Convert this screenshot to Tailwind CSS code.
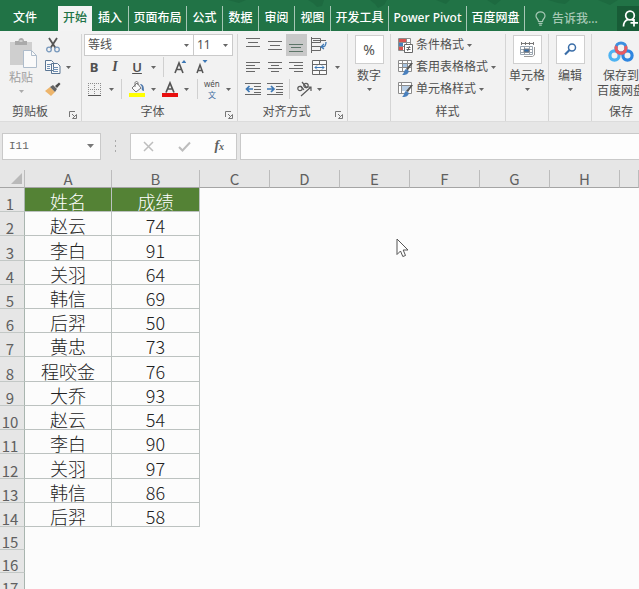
<!DOCTYPE html>
<html lang="zh-CN">
<head>
  <meta charset="UTF-8" />
  <meta name="viewport" content="width=device-width, initial-scale=1.0">
  <title>Excel</title>
  <script src="https://cdn.jsdelivr.net/npm/@tailwindcss/browser@4"></script>
</head>
<body class="h-screen overflow-hidden flex flex-col bg-[#fcfcfc] text-xs text-[#505050] font-['Noto_Sans','Noto_Sans_CJK_SC',sans-serif]">

  <!-- Shared icons -->
  <svg class="hidden">
    <symbol id="caret" viewBox="0 0 5 3"><path d="M0 0h5L2.5 3z" fill="#666" /></symbol>
    <symbol id="launcher" viewBox="0 0 8 8"><path d="M.5 6V.5H6M3 3l3 3M7.500 3.500v4h-4z" fill="none" stroke="#777" /></symbol>
  </svg>

  <!-- Tabs -->
  <nav class="relative flex shrink-0 items-end h-[31px] bg-[#217346] text-white font-medium overflow-hidden whitespace-nowrap">
    <svg class="absolute left-0 top-0 w-full h-2" viewBox="0 0 639 8" preserveAspectRatio="xMinYMin slice" fill="#1d6a40">
      <path d="M228 0h18l-7 3zM308 0h16l-2 6-5 1-4-4zM370 0h17l-3 5-6 3-3-4zM436 0h14l-4 4zM487 0h14l-6 5zM548 0h22l-5 4-7-1zM598 0h20l-8 5z" />
    </svg>
    <a href="#" class="relative w-[58px] h-[25px] pl-[13px] leading-[23px]">文件</a>
    <a href="#" class="relative w-[34px] h-[25px] text-center leading-[23px] bg-[#f3f3f3] text-[#217346]">开始</a>
    <div class="relative flex h-[25px] text-center leading-[23px] [&>a]:border-r [&>a]:border-[#a6c7b5]">
      <a href="#" class="w-[37px]">插入</a>
      <a href="#" class="w-[58px]">页面布局</a>
      <a href="#" class="w-9">公式</a>
      <a href="#" class="w-9">数据</a>
      <a href="#" class="w-9">审阅</a>
      <a href="#" class="w-9">视图</a>
      <a href="#" class="w-[58px]">开发工具</a>
      <a href="#" class="w-[78px]">Power Pivot</a>
      <a href="#" class="w-[58px]">百度网盘</a>
    </div>
    <button class="relative flex h-[25px] pl-2.5 gap-1.5 items-center text-[#a5c8b4] leading-[23px]">
      <svg class="w-[11px] h-[15px]" viewBox="0 0 11 15" fill="none" stroke="currentColor" stroke-width="1.200"><path d="M3.500 10.500C3.500 8 1 7.500 1 5a4.500 4.200 0 0 1 9 0c0 2.500-2.500 3-2.500 5.500zM3.500 12.300h4M4.200 14.200h2.600" /></svg>
      告诉我...
    </button>
    <button aria-label="共享" class="relative ml-auto w-[22px] h-[25px] bg-[#185c37] overflow-hidden">
      <svg class="ml-[5px] w-[17px] h-[17px]" viewBox="0 0 17 17" fill="none" stroke="#fff" stroke-width="1.700"><circle cx="8" cy="5.500" r="4.300" /><path d="M1.500 16.500c0-3.500 1.500-6 4.500-7M10 9.500l1.500 1M12 9v7.500M8.500 12.800h7.500" /></svg>
    </button>
  </nav>

  <!-- Ribbon -->
  <div class="flex shrink-0 h-[91px] pt-[3px] bg-[#f2f2f2] overflow-hidden whitespace-nowrap leading-4 border-b border-[#dcdcdc] [&_h2]:leading-6">

    <section class="relative w-[82px] shrink-0 border-r border-[#d5d5d5]">
      <div class="flex h-[66px]">
        <button class="w-[42px] flex flex-col items-center pt-1 text-[#a0a0a0]">
          <svg class="w-7 h-[30px] shrink-0 ml-1" viewBox="0 0 28 30"><path d="M1 4h22v23H1z" fill="#cfcfcf" /><path d="M6 3h3.500c0-4 5.500-4 5.500 0H18v4H6z" fill="#aaa" /><path d="M10.500 3h3" stroke="#f2f2f2" /><path d="M14.500 12.500h8l5 5v12h-13z" fill="#fafafa" stroke="#aebccb" /><path d="M22.500 12.500v5h5" fill="none" stroke="#aebccb" /></svg>
          <span class="mt-0.5">粘贴</span>
          <svg class="w-[5px] h-[3px] mt-1 opacity-50"><use href="#caret" /></svg>
        </button>
        <div class="flex flex-col">
          <button aria-label="剪切" class="h-[22px] pl-1"><svg class="w-[14px] h-4" viewBox="0 0 14 16" fill="none"><path d="M3 1l6.500 10M11 1L4.500 11" stroke="#555" stroke-width="1.800" /><circle cx="3" cy="12.500" r="2.300" stroke="#7899bd" stroke-width="1.300" /><circle cx="11" cy="12.500" r="2.300" stroke="#7899bd" stroke-width="1.300" /></svg></button>
          <button aria-label="复制" class="h-[22px] pl-[3px] flex items-center gap-[5px]"><svg class="w-4 h-4" viewBox="0 0 16 16" fill="#fafafa" stroke="#5b7694"><path d="M.5 1.500h6l2 2v8h-8zM6.500 4.500h6l2.500 2.500v7.500H6.500z" /><path d="M2 5.500h4M2 7.500h3M2 9.500h3M8 8.500h5M8 10.500h5M8 12.500h5" stroke="#6f8fb3" /></svg><svg class="w-[5px] h-[3px]"><use href="#caret" /></svg></button>
          <button aria-label="格式刷" class="h-[22px] pl-[3px]"><svg class="w-4 h-[14px]" viewBox="0 0 16 14"><path d="M5 5l5 5-4 4-6-5z" fill="#edb56c" /><path d="M5 5l3-2 4 4-2 3z" fill="#666" /><path d="M10 4l4-3.500L15.500 2 12 6z" fill="#4d4d4d" /></svg></button>
        </div>
      </div>
      <h2 class="pl-3">剪贴板</h2>
      <button aria-label="剪贴板设置" class="absolute right-1 bottom-0.5"><svg class="w-2 h-2"><use href="#launcher" /></svg></button>
    </section>

    <section class="relative w-[156px] shrink-0 pl-0.5 border-r border-[#d5d5d5]">
      <div class="flex h-[22px]">
        <div class="relative w-[110px] border border-[#cacaca] bg-white">
          <select aria-label="字体" class="appearance-none w-full h-5 pl-[3px] leading-5"><option>等线</option></select>
          <svg class="absolute right-1 top-[9px] w-[5px] h-[3px] pointer-events-none"><use href="#caret" /></svg>
        </div>
        <div class="relative w-10 -ml-px border border-[#cacaca] bg-white">
          <select aria-label="字号" class="appearance-none w-full h-5 pl-[3px] leading-5"><option>11</option></select>
          <svg class="absolute right-1 top-[9px] w-[5px] h-[3px] pointer-events-none"><use href="#caret" /></svg>
        </div>
      </div>
      <div class="flex items-center h-[22px] text-[13px]">
        <button class="w-5 font-bold">B</button>
        <button class="w-[22px] italic text-sm font-bold font-['Liberation_Serif',serif]">I</button>
        <button class="w-[22px] underline font-semibold">U</button>
        <svg class="w-[5px] h-[3px] ml-[3px] mr-[7px]"><use href="#caret" /></svg>
        <div class="w-px h-5 bg-[#d0d0d0]"></div>
        <button aria-label="增大字号" class="ml-2.5"><svg class="w-3 h-4" viewBox="0 0 12 16"><path d="M1 14L5 4l4 10M2.500 10.500h5" fill="none" stroke="#555" stroke-width="1.600" /><path d="M7.500 4h5L10 1z" fill="#3d78b5" /></svg></button>
        <button aria-label="减小字号" class="ml-2.5"><svg class="w-3 h-4" viewBox="0 0 12 16"><path d="M1 14l3-8 3 8M2 11.500h4" fill="none" stroke="#555" stroke-width="1.500" /><path d="M6.500 1h5L9 4z" fill="#3d78b5" /></svg></button>
      </div>
      <div class="flex items-center h-[22px]">
        <button aria-label="边框" class="ml-1"><svg class="w-[13px] h-[13px]" viewBox="0 0 13 13"><path d="M.5 0v12M6.500 0v12M12.500 0v12M0 .5h13M0 6.500h13" stroke="#8c8c8c" stroke-dasharray="1 1" /><path d="M0 12.500h13" stroke="#555" /></svg></button>
        <svg class="w-[5px] h-[3px] ml-2"><use href="#caret" /></svg>
        <div class="w-px h-5 ml-[7px] bg-[#d0d0d0]"></div>
        <button aria-label="填充颜色" class="ml-[7px]"><svg class="w-4 h-4" viewBox="0 0 16 16"><path d="M0 12h16v4H0z" fill="#ff0" /><path d="M3 7l5-5 4 5-5 4z" fill="#fafafa" stroke="#777" /><path d="M6 6V2c0-2 3-2 3 0v2" fill="none" stroke="#777" /><path d="M11 3c3 0 4 2 4 7-2 0-3-2-2-4z" fill="#4f79ad" /></svg></button>
        <svg class="w-[5px] h-[3px] ml-1.5"><use href="#caret" /></svg>
        <button aria-label="字体颜色" class="ml-1.5"><svg class="w-4 h-4" viewBox="0 0 16 16"><path d="M0 12h16v4H0z" fill="#e81010" /><path d="M4 11.500L8 2l4 9.500M5.500 8h5" fill="none" stroke="#555" stroke-width="1.700" /></svg></button>
        <svg class="w-[5px] h-[3px] ml-1.5"><use href="#caret" /></svg>
        <div class="w-px h-5 ml-2 bg-[#d0d0d0]"></div>
        <button class="ml-1.5 flex flex-col items-center text-[8px] leading-[11px]"><span>wén</span><span class="text-[#3d6c9f]">文</span></button>
        <svg class="w-[5px] h-[3px] ml-1.5"><use href="#caret" /></svg>
      </div>
      <h2 class="text-center pr-4">字体</h2>
      <button aria-label="字体设置" class="absolute right-1 bottom-0.5"><svg class="w-2 h-2"><use href="#launcher" /></svg></button>
    </section>

    <section class="relative w-[110px] shrink-0 pl-1 border-r border-[#d5d5d5]">
      <div class="grid grid-cols-[22px_22px_20px_26px_10px] items-center justify-items-center h-[66px] grid-rows-3 [&>button]:h-[22px]">
        <button aria-label="顶端对齐"><svg class="w-[14px] h-4" viewBox="0 0 14 16" stroke="#686868"><path d="M0 1.500h14M2 5.500h10M0 9.500h14" /></svg></button>
        <button aria-label="垂直居中"><svg class="w-[14px] h-4" viewBox="0 0 14 16" stroke="#686868"><path d="M0 4.500h14M2 8.500h10M0 12.500h14" /></svg></button>
        <button aria-label="底端对齐" class="w-[21px] bg-[#c8c8c8]"><svg class="w-[14px] h-4 mx-auto" viewBox="0 0 14 16" stroke="#5d7568"><path d="M0 7.500h14M2 10.500h10M0 14.500h14" /></svg></button>
        <button aria-label="自动换行"><svg class="w-4 h-4" viewBox="0 0 16 16" fill="none" stroke="#686868"><path d="M.5 0v16M.5 1.500h9v4h-9M.5 9.500h9v4h-9M2 3.500h13" /><path d="M15 5c0 4-1 5-4 5M13 7l-3 3 3 2" stroke="#3d78b5" stroke-width="1.300" /></svg></button>
        <span></span>
        <button aria-label="左对齐"><svg class="w-[14px] h-3" viewBox="0 0 14 12" stroke="#686868"><path d="M0 1.500h14M0 4.500h9M0 7.500h14M0 10.500h9" /></svg></button>
        <button aria-label="居中"><svg class="w-[14px] h-3" viewBox="0 0 14 12" stroke="#686868"><path d="M0 1.500h14M3 4.500h8M0 7.500h14M3 10.500h8" /></svg></button>
        <button aria-label="右对齐"><svg class="w-[14px] h-3" viewBox="0 0 14 12" stroke="#686868"><path d="M0 1.500h14M5 4.500h9M0 7.500h14M5 10.500h9" /></svg></button>
        <button aria-label="合并后居中"><svg class="w-[15px] h-[15px]" viewBox="0 0 15 15" fill="#fafafa" stroke="#686868"><path d="M.5.5h14v14H.5zM.5 4.500h14M.5 10.500h14M7.500.5v4M7.500 10.500v4" /><path d="M3 7.500h9M5 5.500l-2 2 2 2M10 5.500l2 2-2 2" fill="none" stroke="#3d78b5" /></svg></button>
        <svg class="w-[5px] h-[3px]"><use href="#caret" /></svg>
        <button aria-label="减少缩进量"><svg class="w-4 h-3" viewBox="0 0 16 12" stroke="#686868"><path d="M0 .5h16M9 3.500h7M9 6.500h7M9 9.500h7M0 11.500h16" /><path d="M8 6H2M4.500 3L1.500 6l3 3" fill="none" stroke="#3d78b5" stroke-width="1.700" /></svg></button>
        <button aria-label="增加缩进量"><svg class="w-4 h-3" viewBox="0 0 16 12" stroke="#686868"><path d="M0 .5h16M9 3.500h7M9 6.500h7M9 9.500h7M0 11.500h16" /><path d="M0 6h6M4 3l3 3-3 3" fill="none" stroke="#3d78b5" stroke-width="1.700" /></svg></button>
        <div class="col-span-3 justify-self-stretch flex items-center pl-[3px]">
          <div class="w-px h-5 bg-[#d0d0d0]"></div>
          <button aria-label="方向" class="ml-1.5"><svg class="w-[17px] h-4" viewBox="0 0 17 16" fill="none" stroke="#5a5a5a" stroke-width="1.200"><circle cx="4" cy="7.500" r="2.200" /><path d="M4.500 4.800l3.500 4M6 1l5 6" /><circle cx="10" cy="4.500" r="2.200" /><path d="M5 15L15 6M11 6h4v4" /></svg></button>
          <svg class="w-[5px] h-[3px] ml-1"><use href="#caret" /></svg>
        </div>
      </div>
      <h2 class="text-center pr-4">对齐方式</h2>
      <button aria-label="对齐设置" class="absolute right-1 bottom-0.5"><svg class="w-2 h-2"><use href="#launcher" /></svg></button>
    </section>

    <section class="w-[43px] shrink-0 border-r border-[#d5d5d5]">
      <button class="w-full flex flex-col items-center">
        <span class="mt-px size-[29px] flex items-center justify-center bg-white border border-[#cfcfcf] text-sm">%</span>
        <span class="mt-1">数字</span>
        <svg class="w-[5px] h-[3px] mt-1"><use href="#caret" /></svg>
      </button>
    </section>

    <section class="w-[115px] shrink-0 pl-[7px] border-r border-[#d5d5d5]">
      <button class="flex items-center gap-[3px] h-[22px]">
        <svg class="w-[15px] h-[15px]" viewBox="0 0 15 15"><path d="M.5.5h12v12H.5zM.5 4.500h12M.5 8.500h12M4.500.5v12M8.500.5v12" fill="#fff" stroke="#8c8c8c" /><path d="M1 1h7v3H1zM1 9h4v3H1z" fill="#d9534f" /><path d="M1 5h4v3H1z" fill="#4a80bd" /><path d="M6.500 6.500h8v8h-8z" fill="#fff" stroke="#666" /><path d="M8.500 9.500h4M8.500 11.500h4M11.500 8l-2 5" stroke="#666" /></svg>
        条件格式 <svg class="w-[5px] h-[3px]"><use href="#caret" /></svg>
      </button>
      <button class="flex items-center gap-[3px] h-[22px]">
        <svg class="w-[15px] h-[15px]" viewBox="0 0 15 15"><path d="M.5.5h13v11H.5zM.5 3.500h13M.5 7.500h13M4.500.5v11M9.500.5v11" fill="#fff" stroke="#8c8c8c" /><path d="M5 4h4v3H5z" fill="#a9c5e2" /><path d="M15 3l-5 7-2-1 5-6z" fill="#555" /><path d="M8 9l3 2c-1 4-4 4-7 4 2-1 2-5 4-6z" fill="#4a80bd" /></svg>
        套用表格格式 <svg class="w-[5px] h-[3px]"><use href="#caret" /></svg>
      </button>
      <button class="flex items-center gap-[3px] h-[22px]">
        <svg class="w-[15px] h-[15px]" viewBox="0 0 15 15"><path d="M.5.5h13v11H.5zM.5 3.500h13M3.500.5v11" fill="#fff" stroke="#8c8c8c" /><path d="M4 4h7v5H4z" fill="#b9cfe6" /><path d="M15 3l-5 7-2-1 5-6z" fill="#555" /><path d="M8 9l3 2c-1 4-4 4-7 4 2-1 2-5 4-6z" fill="#4a80bd" /></svg>
        单元格样式 <svg class="w-[5px] h-[3px]"><use href="#caret" /></svg>
      </button>
      <h2 class="text-center pr-2">样式</h2>
    </section>

    <section class="w-[43px] shrink-0 border-r border-[#d5d5d5]">
      <button class="w-full flex flex-col items-center">
        <span class="mt-px size-[29px] flex items-center justify-center bg-white border border-[#cfcfcf]">
          <svg class="w-[15px] h-[15px]" viewBox="0 0 15 15" fill="none" stroke="#777"><path d="M1 1.500h12M1.500 0v3M5.500 0v3M9.500 0v3M13.500 0v3" /><path d="M.5 4.500h12v8H.5zM.5 7.500h12M.5 10.500h12M4.500 4.500v8M9.500 4.500v8" stroke="#9aa5b0" /><path d="M4 7h5v3H4z" fill="#2f6db0" /><path d="M14.500 5v8l-2 1.500H4" stroke="#999" /></svg>
        </span>
        <span class="mt-1">单元格</span>
        <svg class="w-[5px] h-[3px] mt-1"><use href="#caret" /></svg>
      </button>
    </section>

    <section class="w-[43px] shrink-0 border-r border-[#d5d5d5]">
      <button class="w-full flex flex-col items-center">
        <span class="mt-px size-[29px] flex items-center justify-center bg-white border border-[#cfcfcf]">
          <svg class="w-[13px] h-[13px]" viewBox="0 0 13 13" fill="none" stroke="#3b6ea8"><circle cx="8" cy="4.500" r="3.500" stroke-width="1.500" /><path d="M5.500 7L1 11.500" stroke-width="2.200" /></svg>
        </span>
        <span class="mt-1">编辑</span>
        <svg class="w-[5px] h-[3px] mt-1"><use href="#caret" /></svg>
      </button>
    </section>

    <section class="w-[58px] shrink-0">
      <button class="w-full h-[66px] flex flex-col items-center pt-[7px]">
        <svg class="w-[26px] h-[21px] shrink-0" viewBox="0 0 26 21" fill="none" stroke-width="3.200"><circle cx="6.500" cy="14.500" r="4.600" stroke="#4db3f2" /><circle cx="19.500" cy="14.500" r="4.600" stroke="#2f86e0" /><circle cx="13" cy="7" r="5" stroke="#3c8fe0" /><path d="M8.500 5a5 5 0 1 0 9 0" stroke="#ea5a60" /></svg>
        <span class="mt-1.5 flex flex-col items-center leading-[15px]"><span>保存到</span><span>百度网盘</span></span>
      </button>
      <h2 class="text-center">保存</h2>
    </section>
  </div>

  <!-- Formula bar -->
  <div class="flex shrink-0 items-center h-12 pl-0.5 bg-[#e6e6e6]">
    <div class="flex items-center w-[99px] h-[27px] bg-[#fdfdfd] border border-[#c9c9c9]">
      <input aria-label="名称框" value="I11" class="w-20 pl-1.5 text-[11px] text-[#666] font-['Liberation_Mono',monospace]">
      <button aria-label="名称列表" class="ml-1"><svg class="w-[7px] h-1" viewBox="0 0 7 4"><path d="M0 0h7L3.500 4z" fill="#777" /></svg></button>
    </div>
    <svg class="w-[3px] h-3 ml-[13px] mr-[13px]" viewBox="0 0 3 12" fill="#aaa"><path d="M1 0h1v2H1zM1 5h1v2H1zM1 10h1v2H1z" /></svg>
    <div class="flex items-center justify-around w-[107px] h-[27px] bg-[#fdfdfd] border border-[#c9c9c9]">
      <button aria-label="取消"><svg class="w-[11px] h-[11px]" viewBox="0 0 11 11" fill="none" stroke="#bdbdbd" stroke-width="1.500"><path d="M1 1l9 9M10 1l-9 9" /></svg></button>
      <button aria-label="输入"><svg class="w-[13px] h-[11px]" viewBox="0 0 13 11" fill="none" stroke="#bdbdbd" stroke-width="2"><path d="M1 6l3.500 3.500L12 1.500" /></svg></button>
      <button aria-label="插入函数" class="italic font-bold text-sm text-[#606060] font-['Liberation_Serif',serif]">f<span class="text-[10px]">x</span></button>
    </div>
    <input aria-label="编辑栏" class="grow min-w-0 h-[27px] ml-[3px] px-1 bg-[#fdfdfd] border border-r-0 border-[#c9c9c9]">
  </div>

  <!-- Sheet -->
  <main class="relative">
    <table class="w-full table-fixed border-separate border-spacing-0 text-center font-['Noto_Sans_CJK_SC',sans-serif]
                  [&_th]:font-normal [&_th]:text-[#606060] [&_th]:bg-[#e6e6e6] [&_th]:p-0
                  [&_thead_th]:border-r [&_thead_th]:border-b [&_thead_th]:border-r-[#bcbcbc] [&_thead_th]:border-b-[#a5a5a5]
                  [&_thead_th]:h-[18px] [&_thead_th]:text-[15px] [&_thead_th]:leading-[17px]
                  [&_tbody_th]:border-r [&_tbody_th]:border-b [&_tbody_th]:border-r-[#a9b5af] [&_tbody_th]:border-b-[#c3c8c6]
                  [&_tbody_th]:align-bottom [&_tbody_th]:text-[15px] [&_tbody_th]:leading-[15px] [&_tbody_th]:pr-1
                  [&_td]:px-0 [&_td]:pb-0 [&_td]:pt-[3px] [&_td]:border-r [&_td]:border-b [&_td]:border-[#bcc2c0] [&_td]:text-lg [&_td]:leading-5 [&_td]:font-light [&_td]:text-[#222]">
      <colgroup>
        <col class="w-[25px]"><col class="w-[87px]"><col class="w-[88px]">
        <col class="w-[70px]"><col class="w-[70px]"><col class="w-[70px]"><col class="w-[70px]"><col class="w-[70px]"><col class="w-[70px]"><col>
      </colgroup>
      <thead>
        <tr>
          <th><svg class="w-[11px] h-[11px] ml-auto mr-0.5" viewBox="0 0 11 11"><path d="M11 0v11H0z" fill="#b9b9b9" /></svg></th>
          <th>A</th><th>B</th><th>C</th><th>D</th><th>E</th><th>F</th><th>G</th><th>H</th><th></th>
        </tr>
      </thead>
      <tbody>
        <tr class="h-6 [&>td]:bg-[#548235] [&>td]:text-white!"><th>1</th><td>姓名</td><td>成绩</td></tr>
        <tr class="h-6"><th>2</th><td>赵云</td><td>74</td></tr>
        <tr class="h-[25px]"><th>3</th><td>李白</td><td>91</td></tr>
        <tr class="h-6"><th>4</th><td>关羽</td><td>64</td></tr>
        <tr class="h-6"><th>5</th><td>韩信</td><td>69</td></tr>
        <tr class="h-6"><th>6</th><td>后羿</td><td>50</td></tr>
        <tr class="h-6"><th>7</th><td>黄忠</td><td>73</td></tr>
        <tr class="h-[25px]"><th>8</th><td>程咬金</td><td>76</td></tr>
        <tr class="h-6"><th>9</th><td>大乔</td><td>93</td></tr>
        <tr class="h-6"><th>10</th><td>赵云</td><td>54</td></tr>
        <tr class="h-6"><th>11</th><td>李白</td><td>90</td></tr>
        <tr class="h-[25px]"><th>12</th><td>关羽</td><td>97</td></tr>
        <tr class="h-6"><th>13</th><td>韩信</td><td>86</td></tr>
        <tr class="h-6"><th>14</th><td>后羿</td><td>58</td></tr>
        <tr class="h-[23px]"><th>15</th></tr>
        <tr class="h-[23px]"><th>16</th></tr>
        <tr class="h-[23px]"><th>17</th></tr>
      </tbody>
    </table>

    <!-- Mouse pointer -->
    <svg class="absolute left-[396px] top-[68px] w-[13px] h-[20px]" viewBox="0 0 13 20"><path d="M1 1v15.500l3.500-3.500 2.300 5.500 2.700-1-2.300-5.500H12z" fill="#fff" stroke="#555" /></svg>
  </main>

</body>
</html>
